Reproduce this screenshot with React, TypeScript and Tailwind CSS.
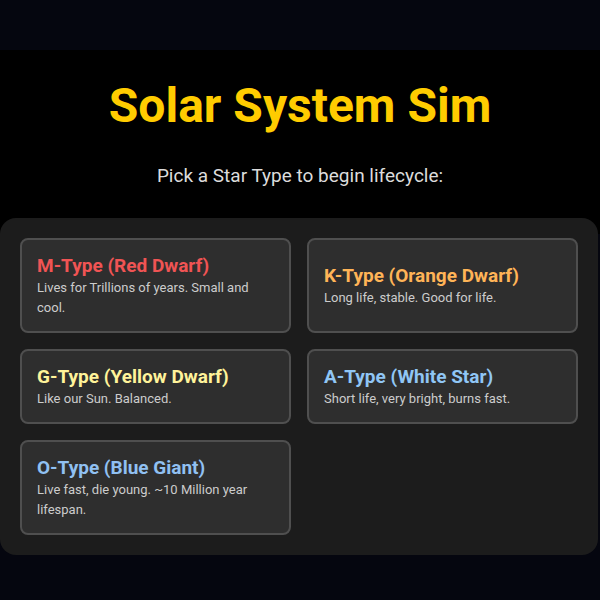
const stars = [
  {
    name: "M-Type (Red Dwarf)",
    color: "text-[#f05454]",
    blurb: "Lives for Trillions of years. Small and cool.",
  },
  {
    name: "K-Type (Orange Dwarf)",
    color: "text-[#ffb457]",
    blurb: "Long life, stable. Good for life.",
  },
  {
    name: "G-Type (Yellow Dwarf)",
    color: "text-[#fff39a]",
    blurb: "Like our Sun. Balanced.",
  },
  {
    name: "A-Type (White Star)",
    color: "text-[#90c6f5]",
    blurb: "Short life, very bright, burns fast.",
  },
  {
    name: "O-Type (Blue Giant)",
    color: "text-[#90c0f2]",
    blurb: "Live fast, die young. ~10 Million year lifespan.",
  },
];

const App = () => {
  return (
    <div className="min-h-screen bg-[#05060f] font-['Roboto',sans-serif]">
      <div className="h-[50px]" />

      {/* Header */}
      <div className="bg-black pt-[28px] pb-[46px] text-center">
        <h1 className="text-[48px] leading-[56px] font-bold text-[#ffcc00]">
          Solar System Sim
        </h1>
        <p className="mt-[30px] text-[19px] leading-[24px] text-[#dcdcdc]">
          Pick a Star Type to begin lifecycle:
        </p>
      </div>

      {/* Star picker */}
      <div className="-mt-4 w-[598px] rounded-2xl bg-[#1c1c1c] p-5">
        <div className="grid grid-cols-2 gap-4">
          {stars.map((star) => (
            <button
              key={star.name}
              className="flex flex-col justify-center rounded-lg border-2 border-[#4f4f4f] bg-[#2e2e2e] px-[15px] pt-[14px] pb-[13px] text-left"
            >
              <span className={`text-[19px] leading-[23px] font-bold ${star.color}`}>
                {star.name}
              </span>
              <span className="mt-px text-[13px] leading-[20px] text-[#cccccc]">
                {star.blurb}
              </span>
            </button>
          ))}
        </div>
      </div>
    </div>
  );
};

export default App;
